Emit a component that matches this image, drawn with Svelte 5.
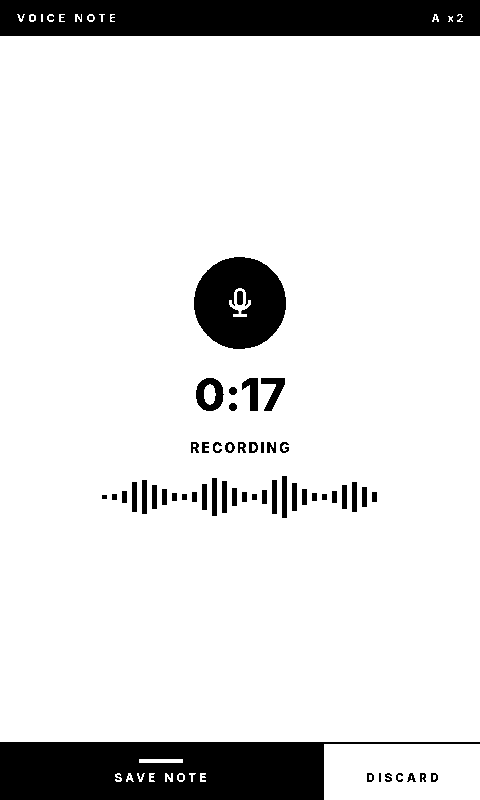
<script lang="ts">
    const bars = [4, 6, 12, 30, 34, 24, 16, 8, 6, 10, 26, 38, 32, 18, 10, 6, 14, 34, 42, 28, 16, 8, 6, 12, 24, 30, 20, 10]
</script>

<div class="App">
    <header class="Top">
        <span class="Title">VOICE NOTE</span>
        <span class="Speed">A x2</span>
    </header>

    <main class="Middle">
        <div class="Mic">
            <svg width="24" height="32" viewBox="0 0 24 32" fill="none" stroke="#fff" stroke-width="3">
                <rect x="7.5" y="2.5" width="9" height="17" rx="4.5" />
                <path d="M2.5 13v2.5a9.5 6.5 0 0 0 19 0V13" />
                <path d="M12 22v6" />
                <path d="M5 28.5h14" />
            </svg>
        </div>
        <div class="Time">0:17</div>
        <div class="Status">RECORDING</div>
        <div class="Wave">
            {#each bars as h}
                <i style="height: {h}px"></i>
            {/each}
        </div>
    </main>

    <footer class="Bottom">
        <button class="Save">
            <span class="Line"></span>
            SAVE NOTE
        </button>
        <button class="Discard">DISCARD</button>
    </footer>
</div>

<style>
    :global(body) {
        background: #fff;
    }
    .App {
        width: 480px;
        height: 800px;
        display: flex;
        flex-direction: column;
        background: #fff;
        color: #000;
        font-family: Inter, "Liberation Sans", sans-serif;
        filter: contrast(100);
    }
    .Top {
        height: 36px;
        flex: none;
        background: #000;
        color: #fff;
        display: flex;
        align-items: center;
        justify-content: space-between;
        padding: 0 14px 0 17px;
        font-size: 11px;
        font-weight: 700;
    }
    .Title {
        letter-spacing: 3.5px;
    }
    .Speed {
        letter-spacing: 2.6px;
    }
    .Middle {
        flex: 1;
        display: flex;
        flex-direction: column;
        align-items: center;
        padding-top: 221px;
    }
    .Mic {
        width: 92px;
        height: 92px;
        border-radius: 50%;
        background: #000;
        display: flex;
        align-items: center;
        justify-content: center;
    }
    .Time {
        margin-top: 17px;
        font-size: 45px;
        line-height: 58px;
        font-weight: 800;
        letter-spacing: -0.4px;
    }
    .Status {
        margin-top: 15px;
        padding-left: 2px;
        font-size: 14px;
        line-height: 17px;
        font-weight: 800;
        letter-spacing: 2px;
    }
    .Wave {
        margin-top: 20px;
        height: 42px;
        display: flex;
        align-items: center;
        gap: 5px;
        padding-right: 1px;
    }
    .Wave i {
        display: block;
        width: 5px;
        background: #000;
    }
    .Bottom {
        height: 58px;
        box-sizing: border-box;
        flex: none;
        display: flex;
        border-top: 2px solid #000;
    }
    .Bottom button {
        border: 0;
        padding: 0;
        font-family: inherit;
        font-size: 12px;
        font-weight: 700;
    }
    .Save {
        width: 324px;
        background: #000;
        color: #fff;
        letter-spacing: 3px;
        display: flex;
        flex-direction: column;
        align-items: center;
        padding-top: 15px !important;
        gap: 7px;
    }
    .Line {
        width: 44px;
        height: 4px;
        margin-right: 2px;
        background: #fff;
    }
    .Discard {
        flex: 1;
        background: #fff;
        color: #000;
        font-weight: 800 !important;
        letter-spacing: 3px;
        padding-top: 10px !important;
        padding-left: 4px !important;
    }
</style>
